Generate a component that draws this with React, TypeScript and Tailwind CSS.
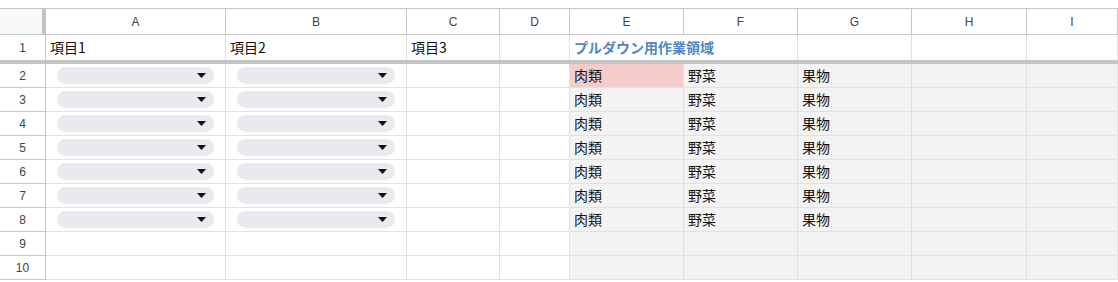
import { ReactNode } from 'react';

const COLS = ['A', 'B', 'C', 'D', 'E', 'F', 'G', 'H', 'I'];
const GRID = 'grid grid-cols-[46px_180px_181px_93px_70px_114px_114px_114px_115px_1fr]';
const LINE = 'border-r border-b border-[#e1e1e1]';
const CJK = "[font-family:'Noto_Sans_CJK_JP','Liberation_Sans',sans-serif]";

function Chip() {
  return (
    <div className="flex-1 mx-[11px] h-[17px] rounded-full bg-[#e8eaed] flex items-center justify-end pr-[8px]">
      <svg width="9" height="5" viewBox="0 0 9 5">
        <path d="M0 0h9L4.5 5z" fill="#111" />
      </svg>
    </div>
  );
}

function Cell({ children, className = '' }: { children?: ReactNode; className?: string }) {
  return (
    <div className={`${LINE} flex items-center pl-[4px] text-[14px] text-[#111] ${CJK} ${className}`}>
      {children}
    </div>
  );
}

export default function App() {
  const dataRows = [2, 3, 4, 5, 6, 7, 8, 9, 10];

  return (
    <div className="w-[1118px] h-[282px] overflow-hidden bg-white [font-family:'Liberation_Sans',Arial,sans-serif]">
      <div className="h-[8px]" />

      {/* column letters */}
      <div className={`${GRID} h-[27px] border-t border-[#c7c7c7]`}>
        <div className="relative bg-[#f8f9fa] border-b border-[#c7c7c7]">
          <div className="absolute right-0 top-0 bottom-0 w-[4px] bg-[#c4c4c4]" />
        </div>
        {COLS.map((c) => (
          <div
            key={c}
            className="border-r border-b border-[#c7c7c7] flex items-center justify-center text-[12px] text-[#444]"
          >
            {c}
          </div>
        ))}
      </div>

      {/* row 1 headings */}
      <div className={`${GRID} h-[25px]`}>
        <div className="border-r border-[#c7c7c7] flex items-center justify-center text-[12px] text-[#444]">1</div>
        <Cell className="border-b-0">項目1</Cell>
        <Cell className="border-b-0">項目2</Cell>
        <Cell className="border-b-0">項目3</Cell>
        <Cell className="border-b-0" />
        <div className={`border-b-0 flex items-center pl-[4px] text-[14px] font-bold text-[#4f86c6] whitespace-nowrap ${CJK}`}>
          プルダウン用作業領域
        </div>
        <Cell className="border-b-0" />
        <Cell className="border-b-0" />
        <Cell className="border-b-0" />
        <Cell className="border-b-0" />
      </div>

      {/* frozen row divider */}
      <div className="h-[4px] bg-[#c4c4c4]" />

      {dataRows.map((r) => {
        const filled = r <= 8;
        return (
          <div key={r} className={`${GRID} h-[24px]`}>
            <div className="border-r border-b border-[#c7c7c7] flex items-center justify-center text-[12px] text-[#444]">
              {r}
            </div>
            <div className={`${LINE} flex items-center`}>{filled && <Chip />}</div>
            <div className={`${LINE} flex items-center`}>{filled && <Chip />}</div>
            <Cell />
            <Cell />
            <Cell className={r === 2 ? 'bg-[#f4cccc]' : 'bg-[#f3f3f3]'}>{filled && '肉類'}</Cell>
            <Cell className="bg-[#f3f3f3]">{filled && '野菜'}</Cell>
            <Cell className="bg-[#f3f3f3]">{filled && '果物'}</Cell>
            <Cell className="bg-[#f3f3f3]" />
            <Cell className="bg-[#f3f3f3]" />
          </div>
        );
      })}
    </div>
  );
}
